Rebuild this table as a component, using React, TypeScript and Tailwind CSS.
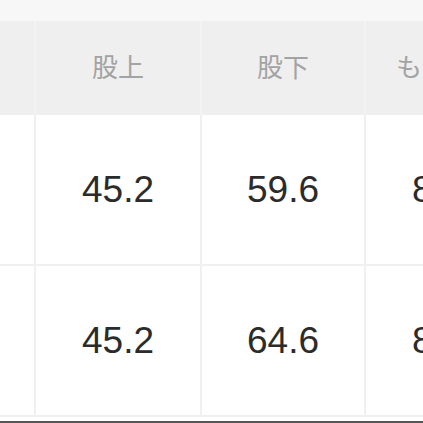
const cols = ["w-[36px]", "w-[166px]", "w-[164px]", "w-[132px]"];

const header = ["", "股上", "股下", "もも周り"];
const rows = [
  ["", "45.2", "59.6", "83.0"],
  ["", "45.2", "64.6", "83.0"],
];

export default function App() {
  return (
    <div
      className="w-[423px] h-[423px] overflow-hidden bg-white"
      style={{ fontFamily: '"Liberation Sans", "Noto Sans CJK JP", sans-serif' }}
    >
      <div className="h-[21px] bg-[#f7f7f7]" />
      <div className="flex h-[94px] bg-[#efefef] w-max">
        {header.map((h, i) => (
          <div
            key={i}
            className={`${cols[i]} shrink-0 flex items-center ${i === 3 ? "justify-start pl-[30px]" : "justify-center"} border-r-2 border-[#f3f3f3] text-[26px] text-[#a3a3a3] whitespace-nowrap`}
          >
            {h}
          </div>
        ))}
      </div>
      {rows.map((r, ri) => (
        <div key={ri} className="flex h-[151px] w-max border-b-2 border-[#f0f0f0]">
          {r.map((v, i) => (
            <div
              key={i}
              className={`${cols[i]} shrink-0 flex items-center ${i === 3 ? "justify-start pl-[46px]" : "justify-center"} border-r-2 border-[#f0f0f0] text-[37px] text-[#2b2b2b] whitespace-nowrap`}
            >
              {v}
            </div>
          ))}
        </div>
      ))}
      <div className="h-[4px]" />
      <div className="h-[3px] bg-[#555555]" />
    </div>
  );
}
